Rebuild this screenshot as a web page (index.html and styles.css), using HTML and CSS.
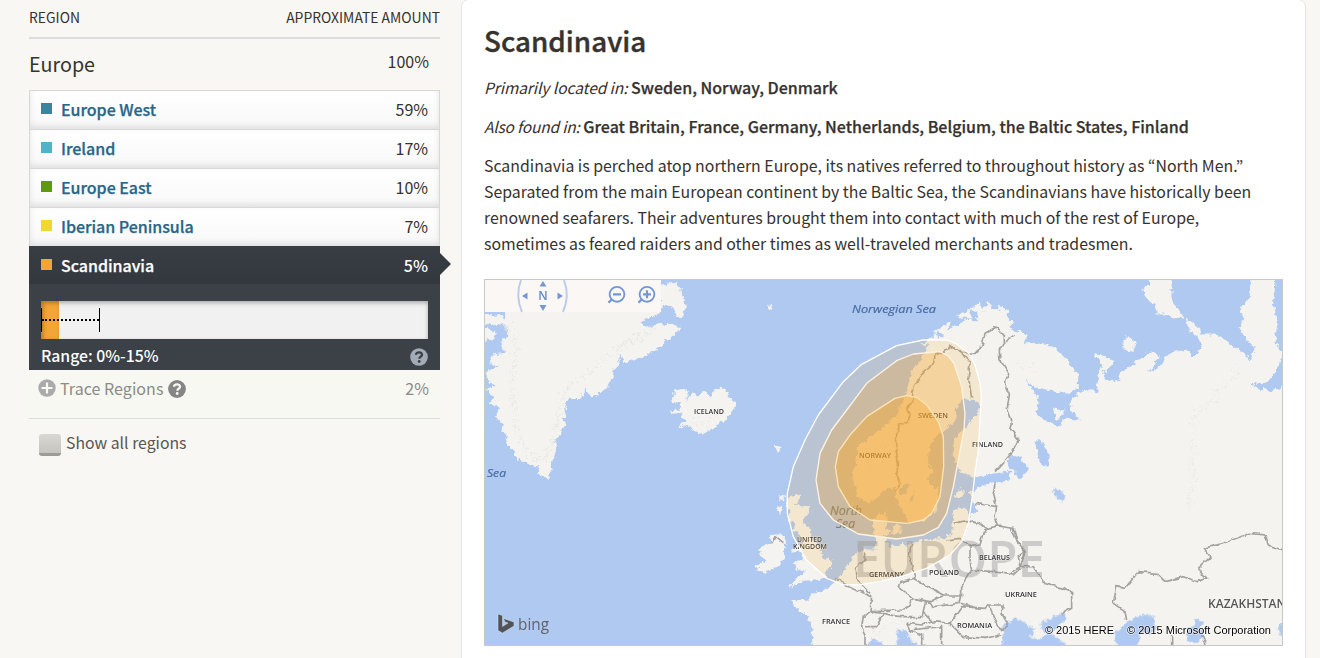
FILE: index.html
```html
<!DOCTYPE html>
<html lang="en">
<head>
<meta charset="utf-8">
<title>Scandinavia</title>
<link rel="stylesheet" href="styles.css">
</head>
<body>
<div class="page">
  <aside class="sidebar">
    <div class="columns"><span>REGION</span><span>APPROXIMATE AMOUNT</span></div>
    <div class="continent"><span class="continent-name">Europe</span><span class="continent-value">100%</span></div>
    <ul class="regions">
      <li class="region"><i class="swatch west"></i><a class="name">Europe West</a><span>59%</span></li>
      <li class="region"><i class="swatch ireland"></i><a class="name">Ireland</a><span>17%</span></li>
      <li class="region"><i class="swatch east"></i><a class="name">Europe East</a><span>10%</span></li>
      <li class="region"><i class="swatch iberia"></i><a class="name">Iberian Peninsula</a><span>7%</span></li>
    </ul>
    <section class="selected">
      <div class="selected-head"><i class="swatch scandi"></i><span class="name">Scandinavia</span><span>5%</span></div>
      <div class="details">
        <div class="bar"><div class="bar-fill"></div><div class="whisker"></div></div>
        <div class="range"><span>Range: 0%-15%</span>
          <svg class="help" width="18" height="18" viewBox="0 0 18 18"><circle cx="9" cy="9" r="8.8" fill="#a3abb7"/><path d="M6 6.8C6.2 3.5 12 3.5 12 6.7C12 8.6 9.3 8.7 9.3 10.8" fill="none" stroke="#3b3f47" stroke-width="2.3"/><circle cx="9.2" cy="13.5" r="1.4" fill="#3b3f47"/></svg>
        </div>
      </div>
    </section>
    <div class="trace">
      <svg class="plus" width="18" height="18" viewBox="0 0 18 18"><circle cx="9" cy="9" r="8.7" fill="#aaa"/><path d="M9 3.5V14.5M3.5 9H14.5" stroke="#f8f8f3" stroke-width="2.2"/></svg>
      <span>Trace Regions</span>
      <svg class="trace-help" width="18" height="18" viewBox="0 0 18 18"><circle cx="9" cy="9" r="8.9" fill="#858585"/><path d="M6 6.8C6.2 3.5 12 3.5 12 6.7C12 8.6 9.3 8.7 9.3 10.8" fill="none" stroke="#f8f8f3" stroke-width="2.3"/><circle cx="9.2" cy="13.5" r="1.4" fill="#f8f8f3"/></svg>
      <span class="trace-value">2%</span>
    </div>
    <label class="show-all"><span class="checkbox"></span>Show all regions</label>
  </aside>

  <main class="panel">
    <h1>Scandinavia</h1>
    <p class="fact"><em>Primarily located in:</em> <b>Sweden, Norway, Denmark</b></p>
    <p class="fact"><em class="tight">Also found in:</em> <b>Great Britain, France, Germany, Netherlands, Belgium, the Baltic States, Finland</b></p>
    <p class="story">Scandinavia is perched atop northern Europe, its natives referred to throughout history as “North Men.”<br>Separated from the main European continent by the Baltic Sea, the Scandinavians have historically been<br>renowned seafarers. Their adventures brought them into contact with much of the rest of Europe,<br>sometimes as feared raiders and other times as well-traveled merchants and tradesmen.</p>

    <svg class="map" width="797" height="365" viewBox="485 280 797 365">
      <defs>
        <filter id="coast" filterUnits="userSpaceOnUse" x="470" y="265" width="830" height="395">
          <feTurbulence type="fractalNoise" baseFrequency=".22" numOctaves="3" seed="8" result="n"/>
          <feDisplacementMap in="SourceGraphic" in2="n" scale="7" xChannelSelector="R" yChannelSelector="G"/>
        </filter>
        <filter id="jitter" filterUnits="userSpaceOnUse" x="470" y="265" width="830" height="395">
          <feTurbulence type="fractalNoise" baseFrequency=".14" numOctaves="2" seed="3" result="n"/>
          <feDisplacementMap in="SourceGraphic" in2="n" scale="5" xChannelSelector="R" yChannelSelector="G"/>
        </filter>
        <filter id="relief" filterUnits="userSpaceOnUse" x="470" y="265" width="830" height="395">
          <feTurbulence type="fractalNoise" baseFrequency=".25" numOctaves="3" seed="5" result="n"/>
          <feDisplacementMap in="SourceGraphic" in2="n" scale="20" xChannelSelector="R" yChannelSelector="G"/>
        </filter>
      </defs>
      <rect x="485" y="280" width="797" height="365" fill="#afc9f0"/>

      <g class="land" filter="url(#coast)">
        <!-- Greenland -->
        <g transform="translate(480 275) scale(.33333)">
          <path d="M78 90L75 160L85 180L65 200L75 235L35 240L30 265L60 270L18 295L28 320L50 335L20 345L45 370L30 385L62 400L50 430L70 445L65 470L82 480L80 510L100 525L110 550L140 560L160 572L175 570L180 600L205 608L213 590L215 560L226 530L225 500L240 480L245 465L258 450L247 430L262 405L250 385L272 370L298 370L315 340L335 368L370 345L385 330L402 300L395 285L418 262L416 235L440 260L470 250L500 240L540 215L562 195L600 160L572 148L530 150L500 158L476 142L500 130L545 112L545 90Z"/>
          <path d="M0 120L70 125L76 145L40 150L0 140ZM0 160L45 170L40 190L0 200ZM542 30L590 25L610 65L616 100L608 128L590 122L575 90L542 92Z"/>
          <path d="M570 380L600 345L602 360L590 385ZM572 408L600 405V412L575 415Z"/>
        </g>
        <!-- Iceland and nearby islets -->
        <g transform="translate(660 275) scale(.33333)">
          <path d="M40 345L75 340L82 365L75 385L100 355L115 365L130 350L150 365L165 345L180 336L200 350L210 370L228 380L220 405L205 425L180 445L150 465L125 477L100 465L90 450L60 455L80 435L65 425L70 412L35 410L65 405L60 380L30 380L45 370Z"/>
          <path d="M325 92L337 88L335 106ZM344 518L360 516L356 528Z"/>
        </g>
        <!-- Mainland with Scandinavia -->
        <path class="main-land" d="M814 655L812 630L808 615L793 606L793 601L810 600L812 593L822 592L837 580L847 567L857 553L865 550L877 550L873 527L875 518L885 512L887 518L883 537L890 547L907 545L927 540L947 538L953 533L953 523L953 513L960 507L967 510L970 517L975 510L973 500L970 493L980 487L997 483L1010 481L1011 471L1000 472L990 474L973 477L960 472L953 453L955 437L967 427L980 410L978 401L962 398L957 407L953 423L937 435L930 443L928 463L933 472L927 480L938 490L937 507L927 517L920 521L910 523L902 510L897 500L895 488L887 489L877 497L867 502L858 497L855 483L853 473L858 460L857 448L870 438L880 430L893 420L903 403L908 387L913 370L923 357L927 347L940 337L953 327L967 320L977 322L978 312L997 309L1003 315L1014 322L1010 330L1027 335L1024 344L1040 343L1053 348L1067 360L1078 375L1077 387L1067 394L1050 390L1037 387L1023 378L1032 388L1038 398L1037 412L1042 420L1060 427L1063 419L1080 420L1070 408L1073 397L1087 390L1098 392L1098 375L1103 363L1093 354L1110 358L1113 364L1103 372L1105 380L1117 382L1122 372L1137 362L1153 350L1159 358L1147 373L1162 365L1170 353L1188 350L1193 358L1198 353L1202 347L1198 335L1217 335L1233 347L1245 355L1250 362L1255 347L1248 342L1240 328L1245 318L1240 310L1250 298L1253 270H1277L1272 303L1277 318L1275 342L1282 355L1277 370L1267 382L1249 384L1260 389L1273 392L1290 381V655Z"/>
        <!-- British Isles -->
        <g transform="translate(740 480) scale(.33333)">
          <path d="M145 50L180 45L170 68L160 75L207 80L205 100L185 125L210 145L215 180L240 210L250 235L275 240L275 260L255 275L262 290L225 300L190 300L150 320L180 285L205 272L170 265L160 250L190 240L185 215L155 210L190 195L185 165L160 150L165 130L145 120L150 95L140 75Z"/>
          <path d="M95 165L125 165L138 185L130 200L130 240L110 260L70 277L50 265L75 240L55 210L70 200L95 190Z"/>
          <path d="M122 52L133 48L128 66ZM110 85L125 80L120 98ZM433 150L450 152L446 165L434 163ZM457 140L480 136L480 158L460 160ZM575 80L592 72L585 98ZM645 40L668 28L670 44L650 50Z"/>
        </g>
        <!-- Norwegian coastal islands -->
        <path d="M960 316L967 311L970 317ZM972 309L979 305L981 311ZM984 309L989 304L991 310ZM938 331L948 325L945 332ZM926 343L935 337L932 343ZM1000 308L1007 311L1003 315Z"/>
        <!-- Russian Arctic islands -->
        <path d="M1153 270L1170 270L1170 298L1181 316L1173 317L1165 312L1158 312L1157 303L1148 298L1143 290L1150 287ZM1128 338L1135 343L1132 350L1125 348L1124 343ZM1188 321L1199 330L1200 336L1190 330ZM1055 410L1063 412L1058 418Z"/>
      </g>

      <g class="water" filter="url(#coast)">
        <g transform="translate(960 275) scale(.33333)"><path d="M150 543L180 545L205 580L195 602L175 612L165 590L140 570ZM225 500L245 495L265 530L267 570L250 577L235 545Z"/></g>
        <g transform="translate(780 320) scale(.33333)"><path d="M356 505L378 490L390 500L370 525L358 525ZM405 510L398 545L388 545ZM585 545L575 575L590 580Z"/></g>
        <g transform="translate(740 480) scale(.33333)"><path d="M470 445L495 450L505 470L540 510H475ZM370 510L400 475L430 490L435 510Z"/></g>
        <g transform="translate(1010 470) scale(.33333)">
          <path d="M130 55L150 60L168 80L155 97L135 80ZM-25 540L-20 470L0 452L30 445L50 465L75 475L60 500L90 505L110 490L140 500L180 540ZM90 463L130 440L170 430L165 450L145 470L120 490L100 485ZM312 490L345 460L375 440L410 432L435 445L435 480L420 495L390 490L382 540H325ZM530 480L550 465L560 445L580 455L570 475L585 490L570 510L545 520L530 505ZM805 460H825V500L810 495Z"/>
        </g>
      </g>

      <!-- Terrain shading -->
      <g class="terrain" filter="url(#relief)">
        <path d="M507 325L516 345L512 395L516 430L529 456L545 460L554 435L564 390L590 372L612 350L635 341L655 331M621 345L640 335"/>
        <path class="ridge" d="M1232 362L1237 376L1222 386L1208 404L1195 416L1192 440L1193 478L1188 510M1200 408L1192 420M1013 360L1022 365L1036 370M870 640L890 623L920 620M868 475L873 455L890 438L900 415M690 420L703 425L722 409"/>
      </g>

      <g class="borders" filter="url(#jitter)">
        <g transform="translate(780 320) scale(.33333)"><path d="M345 515L360 490L350 460L355 430L350 400V340L360 315L385 305L390 285L380 265L400 240L395 215L410 185L430 155L460 130L465 105L505 90L510 75L545 100L570 130L565 170L575 235"/></g>
        <g transform="translate(960 275) scale(.33333)"><path d="M-28 215L5 232L45 235L65 215L75 175L110 155L130 180L130 205L165 182M130 205L118 225L120 255L147 295L133 325L148 360L142 400L155 435L150 460L175 495L150 540L105 590"/></g>
        <g transform="translate(740 480) scale(.33333)"><path d="M705 70L740 75L770 80M765 10L760 40L770 80L765 110L775 138L740 145L720 130L680 122L640 130M620 180L660 175L690 200L720 195L730 160L740 145M775 138L820 145L830 180L855 215L840 265L820 285L760 275L695 270L690 240V200M695 270L665 320V345L610 345L570 325L520 295L480 305L475 320L520 355L570 365L610 345M515 195L510 230L525 295M520 355L495 390L390 392L395 350L300 305L285 295M375 220L370 245L345 265L350 300L390 340M390 392L370 410L365 440L375 465V500M375 440L410 440L430 400L480 410L550 410L560 365L580 380L660 370L665 345M430 400L390 395M555 400L580 425L630 430L665 380L735 385L745 375L790 375L785 400L805 435L785 455L770 430L745 375M630 430L670 470L740 475L780 465M500 430L545 435L580 425M500 430L510 450L605 440V500M510 450L545 465V495L580 500M665 370L700 380M95 190L105 170L130 190"/></g>
        <g transform="translate(1010 470) scale(.33333)"><path d="M0 310L30 290L25 260L45 245L20 215L0 175M30 290L70 290L100 335L140 350L185 365V415L155 432M350 450L345 425L310 400L320 350L345 355L385 305L440 310L465 335L520 320L560 335L590 325L565 295L600 262L580 235L640 220L720 190L765 195L775 225L818 240M485 495V530M575 495L590 530"/></g>
      </g>

      <text class="europe" x="853" y="577" textLength="192" lengthAdjust="spacingAndGlyphs">EUROPE</text>
      <g class="sea-label">
        <text x="852" y="312.500" textLength="84" lengthAdjust="spacingAndGlyphs">Norwegian Sea</text>
        <text x="487" y="477" textLength="19" lengthAdjust="spacingAndGlyphs">Sea</text>
        <text class="north" x="830" y="515" textLength="32" lengthAdjust="spacingAndGlyphs">North</text>
        <text class="north" x="836" y="528" textLength="19" lengthAdjust="spacingAndGlyphs">Sea</text>
      </g>
      <g class="country">
        <text x="694" y="414" textLength="30" lengthAdjust="spacingAndGlyphs">ICELAND</text>
        <text x="918" y="418.400" textLength="30" lengthAdjust="spacingAndGlyphs">SWEDEN</text>
        <text x="859" y="458.400" textLength="32" lengthAdjust="spacingAndGlyphs">NORWAY</text>
        <text x="972" y="447" textLength="31" lengthAdjust="spacingAndGlyphs">FINLAND</text>
        <text x="797" y="542" textLength="25" lengthAdjust="spacingAndGlyphs">UNITED</text>
        <text x="793" y="548.500" textLength="34" lengthAdjust="spacingAndGlyphs">KINGDOM</text>
        <text x="869" y="577" textLength="35" lengthAdjust="spacingAndGlyphs">GERMANY</text>
        <text x="929" y="575" textLength="30" lengthAdjust="spacingAndGlyphs">POLAND</text>
        <text x="979" y="559.500" textLength="31" lengthAdjust="spacingAndGlyphs">BELARUS</text>
        <text x="1005" y="597" textLength="32" lengthAdjust="spacingAndGlyphs">UKRAINE</text>
        <text x="822" y="623.500" textLength="28" lengthAdjust="spacingAndGlyphs">FRANCE</text>
        <text x="957" y="628" textLength="35" lengthAdjust="spacingAndGlyphs">ROMANIA</text>
        <text class="kazakhstan" x="1208" y="608" textLength="78" lengthAdjust="spacingAndGlyphs">KAZAKHSTAN</text>
      </g>

      <g class="zones" transform="translate(780 320) scale(.33333)">
        <path fill-opacity=".16" stroke="#fff" d="M430 60L500 60L530 72L565 98L585 135L600 190L604 230L600 300L595 390L585 460L577 530L565 610L545 665L510 705L440 745L370 768L300 785L230 795L190 794L140 775L80 720L40 650L22 580L22 520L40 440L75 360L115 285L190 185L245 133L350 77Z"/>
        <path fill-opacity=".3" stroke="#fff3df" d="M400 102L480 95L505 108L522 130L545 200L555 280L552 330L535 420L520 500L500 580L475 622L430 645L350 657L235 642L160 600L120 550L108 480L120 400L155 330L260 190L350 122Z"/>
        <path fill-opacity=".43" stroke="#fce3b5" d="M345 235L380 227L410 232L440 255L475 305L490 350L491 440L480 530L455 580L430 600L380 610L270 600L210 560L175 500L166 440L175 395L210 345L260 290Z"/>
      </g>

      <!-- Navigation controls -->
      <rect x="485" y="280" width="176" height="32" fill="#fbf7f5"/>
      <g fill="none" stroke="#bccdea" stroke-width="2"><path d="M521 280Q515 296 522 312M564 280Q570 296 563 312"/></g>
      <g fill="#7498d5"><path d="M539.500 286.500L543 281L546.500 286.500ZM539.500 305L543 311L546.500 305ZM527.500 292.500L522 296L527.500 299.500ZM557.500 292.500L563 296L557.500 299.500Z"/></g>
      <text class="compass" x="543" y="300" text-anchor="middle">N</text>
      <g fill="none" stroke="#7498d5" stroke-width="1.900"><circle cx="617" cy="294.300" r="7.400"/><circle cx="647" cy="294.300" r="7.400"/><path stroke-width="2.200" d="M613 294.300H621M643 294.300H651M647 290.300V298.300M612 299L608.500 302.800M642 299L638.500 302.800"/></g>

      <!-- Attribution -->
      <path d="M498 614L502.500 615.500V626.500L508 623L505 622L503.500 618.500L514 622V626L502.500 633L498 630.500Z" fill="#505358" stroke="#d9e4f5" stroke-width=".5"/>
      <text class="bing" x="518" y="629.500" textLength="31" lengthAdjust="spacingAndGlyphs">bing</text>
      <g class="copyright"><text x="1045" y="634" textLength="69" lengthAdjust="spacingAndGlyphs">© 2015 HERE</text><text x="1127" y="634" textLength="144" lengthAdjust="spacingAndGlyphs">© 2015 Microsoft Corporation</text></g>
    </svg>
  </main>
</div>
</body>
</html>
```
FILE: styles.css
```css
* { box-sizing: border-box; }
body {
  margin: 0;
  height: 658px;
  overflow: hidden;
  background: #f8f7f3;
  color: #36322d;
  font-family: "Noto Sans CJK KR", "Open Sans", sans-serif;
  font-size: 16px;
}
.page { display: flex; height: 658px; }
.sidebar { width: 411px; margin-left: 29px; flex: none; }

.columns {
  display: flex;
  justify-content: space-between;
  height: 39px;
  border-bottom: 2px solid #dcdcdc;
  font-size: 13.9px;
  line-height: 35px;
}
.continent { display: flex; justify-content: space-between; height: 51px; padding-right: 11px; }
.continent-name { font-size: 19.7px; line-height: 50px; }
.continent-value { line-height: 45px; }

.regions { list-style: none; margin: 0; padding: 0; }
.region, .selected-head { display: flex; align-items: center; padding: 0 12px 0 11px; line-height: 38px; }
.region {
  height: 39px;
  padding: 0 11px 2px;
  border: 1px solid #d8d8d8;
  border-bottom: 0;
  background: linear-gradient(#fff, #f8f8f8);
  box-shadow: inset 0 -3px 6px rgba(0, 0, 0, .1);
}
.swatch { width: 11px; height: 11px; margin: 0 9px 2px 0; }
.region .swatch { margin-bottom: 1px; }
.west { background: #3a849d; }
.ireland { background: #50b3ca; }
.east { background: #61990e; }
.iberia { background: #f1d82f; }
.scandi { background: #f3a536; }
.name { flex: 1; color: #266789; font-weight: 500; letter-spacing: -.03px; -webkit-text-stroke: .25px; }

.selected { position: relative; height: 124px; background: #3c4047; color: #fff; font-weight: 500; }
.selected::after {
  content: "";
  position: absolute;
  left: 411px;
  top: 7px;
  border: 11px solid transparent;
  border-left-color: #363a41;
  border-right: 0;
}
.selected-head { height: 38px; padding-left: 12px; background: linear-gradient(#393d44, #33373e); }
.selected-head .name { color: #fff; }
.details { padding: 17px 12px 0; }
.bar { position: relative; height: 38px; background: #f1f1f1; box-shadow: inset 0 2px 4px rgba(0, 0, 0, .3); }
.bar-fill { width: 18px; height: 38px; background: #f3a536; box-shadow: inset 2px 2px 4px rgba(80, 45, 0, .4); }
.whisker { position: absolute; left: 0; top: 7px; width: 59px; height: 24px; border: solid #000; border-width: 0 1px; }
.whisker::after { content: ""; position: absolute; left: 0; right: 0; top: 11px; border-top: 2px dotted #000; }
.range { display: flex; justify-content: space-between; height: 31px; font-size: 15.8px; line-height: 33px; }
.help { margin-top: 9px; }

.trace { display: flex; height: 49px; padding: 0 11px 0 9px; border-bottom: 1px solid #dcdcdc; background: #f8f8f3; color: #8b8b88; line-height: 37px; letter-spacing: .05px; }
.plus { margin: 9px 4px 0 0; }
.trace-help { margin: 10px 0 0 5px; }
.trace-value { margin-left: auto; }
.show-all { display: flex; padding: 15px 0 0 10px; color: #5a564f; font-size: 15.8px; line-height: 18px; }
.checkbox { width: 22px; height: 22px; margin-right: 5px; border-radius: 3px; background: linear-gradient(#d9d8d3, #c5c4be); border-bottom: 3px solid #9e9b94; }

.panel {
  width: 845px;
  height: 670px;
  margin: -1px 0 0 21px;
  padding: 0 22px;
  flex: none;
  border: 1px solid #e8e7e3;
  border-radius: 8px;
  background: #fff;
}
h1 { margin: 15px 0 0; font-size: 27.8px; font-weight: 500; line-height: 50px; -webkit-text-stroke: .4px; }
.fact { margin: 0; height: 39px; line-height: 39px; white-space: nowrap; }
h1 + .fact { margin-top: 3px; }
.fact em { font-size: 15.5px; letter-spacing: -.06px; }
.fact .tight { letter-spacing: -.18px; }
.fact b { font-weight: 500; -webkit-text-stroke: .25px; }
.story { margin: 7px 0 0; font-size: 15.86px; line-height: 26px; white-space: nowrap; }

.map { display: block; box-sizing: content-box; margin-top: 22px; border: 1px solid #c8c8c8; }
.land { fill: #f4f3ef; stroke: #f4f3ef; stroke-width: 3; }
.land .main-land { stroke-width: 1; }
.water { fill: #afc9f0; }
.terrain { fill: none; stroke: #e9e7e2; stroke-width: 2.5; stroke-dasharray: 4 2; opacity: .8; }
.terrain .ridge { stroke-width: 1.5; }
.borders { fill: none; stroke: #a3a2a0; stroke-width: 5; stroke-linejoin: round; }
.europe { fill: #858585; fill-opacity: .36; font: 600 51px "Open Sans", sans-serif; }
.sea-label { fill: #4a6ba3; font: italic 10.5px "Open Sans", sans-serif; stroke: #4a6ba3; stroke-width: .2px; }
.sea-label .north { fill: #5e7185; stroke: #5e7185; font-size: 12px; }
.country { fill: #333335; font: 600 7.4px "Open Sans", sans-serif; stroke: #fff; stroke-width: 1.2px; stroke-opacity: .5; paint-order: stroke; }
.country .kazakhstan { fill: #555; font-size: 11.7px; }
.zones { fill: #f5a62f; stroke-width: 4; stroke-linejoin: round; }
.compass { fill: #5f88cc; font: 600 12px "Open Sans", sans-serif; }
.bing { fill: #606368; font: 17px "Open Sans", sans-serif; }
.copyright { fill: #000; font: 11px "Liberation Sans", Arial, sans-serif; stroke: #fff; stroke-opacity: .6; stroke-width: 1.5px; paint-order: stroke; }
```
